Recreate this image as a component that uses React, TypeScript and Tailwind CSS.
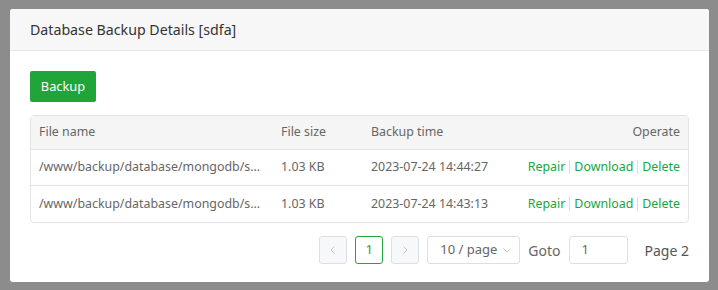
import React from "react";

const rows = [
  { name: "/www/backup/database/mongodb/s...", size: "1.03 KB", time: "2023-07-24 14:44:27" },
  { name: "/www/backup/database/mongodb/s...", size: "1.03 KB", time: "2023-07-24 14:43:13" },
];

export default function App() {
  return (
    <div
      className="w-[718px] h-[290px] bg-[#8c8c8c] pt-[9px] pl-[10px]"
      style={{ fontFamily: '"Noto Sans", "Open Sans", sans-serif' }}
    >
      <div className="w-[699px] h-[273px] bg-white rounded-[3px] overflow-hidden">
        <div className="h-[42px] bg-[#f7f7f7] border-b border-[#e8e8e8] pl-[20px] flex items-center text-[14.2px] text-[#333]">
          Database Backup Details [sdfa]
        </div>
        <div className="px-[20px] pt-[20px]">
          <button className="h-[31px] w-[66px] bg-[#20a53a] text-white text-[12.8px] rounded-[2px] flex items-center justify-center">
            Backup
          </button>
          <div className="mt-[13px] border border-[#e4e4e4] rounded-[4px] text-[12.4px] text-[#666] overflow-hidden">
            <div className="h-[34px] bg-[#f5f5f5] flex items-center border-b border-[#e4e4e4] px-[8px]">
              <div className="w-[242px]">File name</div>
              <div className="w-[90px]">File size</div>
              <div className="flex-1">Backup time</div>
              <div>Operate</div>
            </div>
            {rows.map((r, i) => (
              <div
                key={i}
                className={`h-[36px] flex items-center px-[8px] ${i === 0 ? "border-b border-[#e4e4e4]" : ""}`}
              >
                <div className="w-[242px] whitespace-nowrap">{r.name}</div>
                <div className="w-[90px]">{r.size}</div>
                <div className="flex-1">{r.time}</div>
                <div className="flex items-center text-[#20a53a]">
                  <span>Repair</span>
                  <span className="mx-[4px] w-px h-[14px] bg-[#ddd]" />
                  <span>Download</span>
                  <span className="mx-[4px] w-px h-[14px] bg-[#ddd]" />
                  <span>Delete</span>
                </div>
              </div>
            ))}
          </div>
          <div className="mt-[13px] flex items-center justify-end text-[13px] text-[#666]">
            <div className="w-[28px] h-[28px] border border-[#dcdfe6] rounded-[3px] bg-[#f7f8fa] flex items-center justify-center text-[#c0c4cc]">
              <svg width="10" height="10" viewBox="0 0 10 10" fill="none" stroke="currentColor" strokeWidth="1">
                <path d="M6.5 1.5 L3 5 L6.5 8.5" />
              </svg>
            </div>
            <div className="ml-[8px] w-[28px] h-[28px] border border-[#20a53a] rounded-[3px] flex items-center justify-center text-[#20a53a]">
              1
            </div>
            <div className="ml-[8px] w-[28px] h-[28px] border border-[#dcdfe6] rounded-[3px] bg-[#f7f8fa] flex items-center justify-center text-[#c0c4cc]">
              <svg width="10" height="10" viewBox="0 0 10 10" fill="none" stroke="currentColor" strokeWidth="1">
                <path d="M3.5 1.5 L7 5 L3.5 8.5" />
              </svg>
            </div>
            <div className="ml-[8px] w-[93px] h-[28px] border border-[#dcdfe6] rounded-[3px] flex items-center pl-[12px] text-[#666]">
              <span>10 / page</span>
              <svg className="ml-[5px] text-[#c0c4cc]" width="10" height="10" viewBox="0 0 10 10" fill="none" stroke="currentColor" strokeWidth="1">
                <path d="M1.5 3.5 L5 7 L8.5 3.5" />
              </svg>
            </div>
            <span className="ml-[8px] text-[14px]">Goto</span>
            <div className="ml-[8px] w-[59px] h-[28px] border border-[#dcdfe6] rounded-[3px] flex items-center pl-[12px]">
              1
            </div>
            <span className="ml-[17px] text-[14px] text-[#555]">Page 2</span>
          </div>
        </div>
      </div>
    </div>
  );
}
